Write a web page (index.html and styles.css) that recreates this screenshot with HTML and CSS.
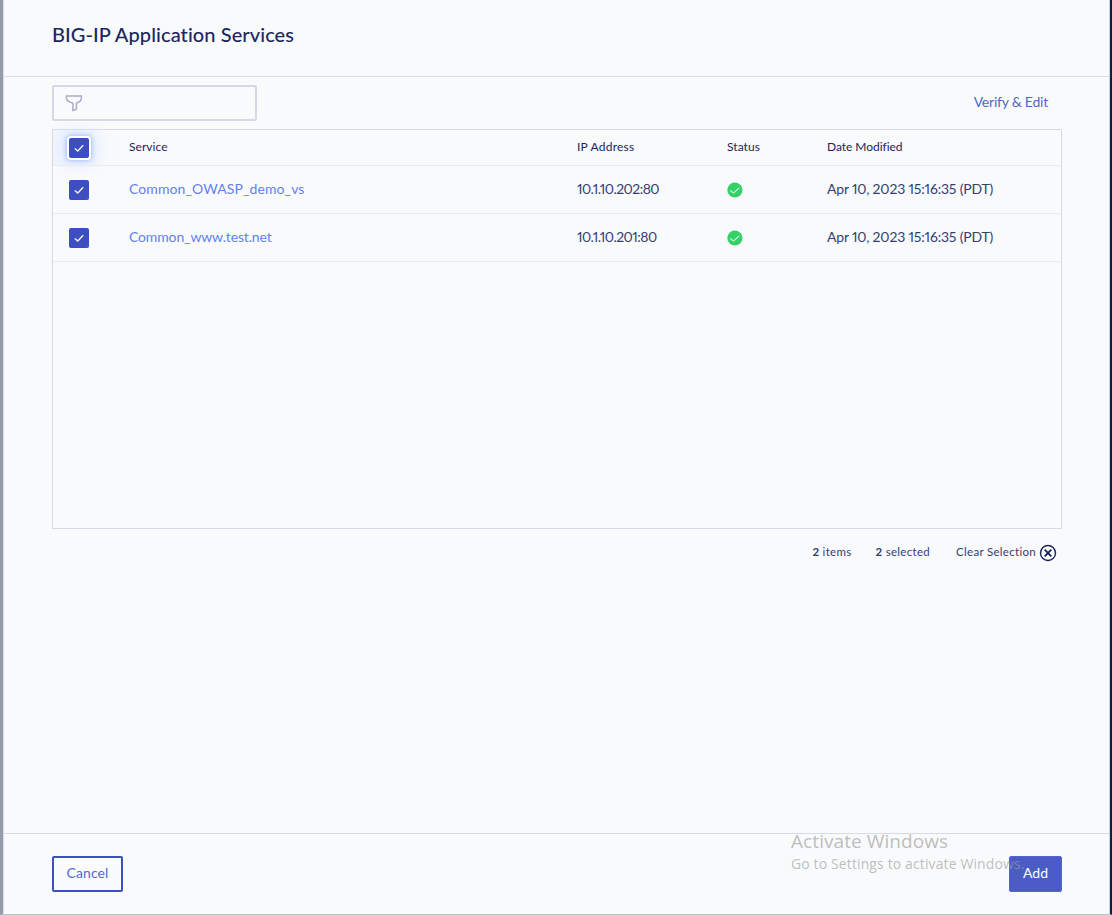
FILE: index.html
```html
<!DOCTYPE html>
<html lang="en">
<head>
<meta charset="utf-8">
<title>BIG-IP Application Services</title>
<link rel="stylesheet" href="styles.css">
</head>
<body>
<svg class="defs" width="0" height="0">
  <symbol id="tick" viewBox="0 0 20 20"><path d="M5.8 10.5l3 2.6 5.4-5.8" fill="none" stroke="#eef0ff" stroke-width="1.4"/></symbol>
  <symbol id="ok" viewBox="0 0 16 16"><circle cx="7.9" cy="8" r="7.6" fill="#34d168"/><path d="M3.4 8.5l3 2.6 5.9-5.3" fill="none" stroke="#d5ffe0" stroke-width="1.1"/></symbol>
</svg>
<main class="panel">
  <header class="header"><h1 class="title">BIG-IP Application Services</h1></header>
  <section class="content">
    <div class="toolbar">
      <div class="filter">
        <svg width="18" height="18" viewBox="0 0 18 18" fill="none" stroke="#a9adc6" stroke-width="1.5" stroke-linejoin="round"><path d="M1.3 1.9h15.2v1.4c0 3.2-2.4 5.1-5.1 5.9v5.8l-3.5 1.6V9.2C4 8.3 1.3 5.8 1.3 3.3z"/></svg>
      </div>
      <a class="verify">Verify &amp; Edit</a>
    </div>
    <div class="table">
      <div class="row head">
        <span class="check focus"><svg width="20" height="20"><use href="#tick"/></svg></span>
        <span class="text">Service</span><span class="text h-ip">IP Address</span><span class="text">Status</span><span class="text h-date">Date Modified</span>
      </div>
      <div class="row">
        <span class="check"><svg width="20" height="20"><use href="#tick"/></svg></span>
        <a class="text link">Common_OWASP_demo_vs</a><span class="text ip">10.1.10.202:80</span><svg class="ok" width="16" height="16"><use href="#ok"/></svg><span class="text date">Apr 10, 2023 15:16:35 (PDT)</span>
      </div>
      <div class="row">
        <span class="check"><svg width="20" height="20"><use href="#tick"/></svg></span>
        <a class="text link domain">Common_www.test.net</a><span class="text ip">10.1.10.201:80</span><svg class="ok" width="16" height="16"><use href="#ok"/></svg><span class="text date">Apr 10, 2023 15:16:35 (PDT)</span>
      </div>
    </div>
    <div class="summary">
      <span class="items"><b>2</b> items</span>
      <span class="selected"><b>2</b> selected</span>
      <span class="clear">Clear Selection</span>
      <svg width="18" height="18" viewBox="0 0 18 18" fill="none" stroke="#17235c"><circle cx="9" cy="9" r="7.5" stroke-width="1.4"/><path d="M5.7 5.7l6.6 6.6M12.3 5.7l-6.6 6.6" stroke-width="1.9"/></svg>
    </div>
  </section>
  <footer class="footer">
    <button class="btn cancel">Cancel</button>
    <button class="btn add">Add</button>
  </footer>
</main>
<div class="watermark"><div class="wm-title">Activate Windows</div><div class="wm-text">Go to Settings to activate Windows.</div></div>
</body>
</html>
```
FILE: styles.css
```css
* { box-sizing: border-box; }
body { margin: 0; height: 915px; overflow: hidden; background: #f9fafc; font-family: Lato, "Open Sans", sans-serif; font-variant-ligatures: none; color: #343e70; }
.defs { display: block; }
.panel { height: 915px; display: flex; flex-direction: column; border-left: 3px solid #969ba7; border-right: 2px solid #0b2340; border-bottom: 1px solid #bfc1c8; box-shadow: inset 1px 0 #d9dbe5, inset -1px 0 #d0d2d8; }
.header { height: 77px; padding: 19px 49px 0; border-bottom: 1px solid #d8dbe7; }
.title { margin: 0; font-size: 20px; line-height: 30px; font-weight: 500; letter-spacing: .08px; color: #1b2760; white-space: nowrap; }
.content { flex: 1; padding: 8px 48px 0 49px; }
.toolbar { height: 44px; display: flex; justify-content: space-between; align-items: flex-start; }
.filter { width: 205px; height: 36px; padding: 7px 11px; border: 2px solid #d5d8e6; border-radius: 2px; }
.verify { margin-right: 14px; font-size: 14px; line-height: 33px; letter-spacing: -.22px; color: #4f66d0; white-space: nowrap; }
.table { height: 400px; border: 1px solid #d7d9e6; }
.row { height: 48px; display: grid; grid-template-columns: 60px 448px 150px 100px 1fr; align-items: center; padding-left: 16px; border-bottom: 1px solid #ebecf1; font-size: 14px; white-space: nowrap; }
.row > span, .row > a { justify-self: start; }
.text { padding-bottom: 2px; }
.head { height: 36px; font-size: 12px; letter-spacing: .06px; color: #1b2558; background: linear-gradient(90deg, #f0f4fd, #f9fafc 65px); }
.h-ip { letter-spacing: .22px; }
.h-date { letter-spacing: -.04px; }
.check { width: 20px; height: 20px; background: #3d4fc0; border-radius: 2px; }
.check svg, .ok { display: block; }
.focus { box-shadow: 0 0 0 2px #fff, 0 0 4px 3px #a9c5ff, 0 0 14px 6px #dce7ff; }
.link { color: #6481f3; letter-spacing: .1px; }
.domain { letter-spacing: -.14px; }
.ip, .date { font-variant-numeric: proportional-nums; }
.ip { letter-spacing: -.53px; }
.date { letter-spacing: -.18px; }
.summary { height: 48px; display: flex; align-items: center; justify-content: flex-end; padding-right: 5px; font-size: 11.5px; letter-spacing: .3px; white-space: nowrap; }
.items, .selected, .clear { padding-bottom: 3px; }
.selected { margin-left: 24px; }
.clear { margin: 0 3px 0 26px; }
.footer { height: 81px; padding: 22px 48px 0 49px; border-top: 1px solid #d8dbe7; display: flex; justify-content: space-between; }
.btn { height: 36px; padding: 0 0 2px; border-radius: 2px; font: 14px/30px Lato, sans-serif; }
.cancel { width: 71px; background: #fafbfd; border: 2px solid #3d4fc4; color: #5467d0; letter-spacing: .1px; }
.add { width: 53px; background: #4c5cc5; border: 1px solid #5365d2; color: #fff; }
.watermark { position: absolute; left: 791px; top: 829px; font-family: "Open Sans", sans-serif; color: rgba(155,155,155,.65); white-space: nowrap; }
.wm-title { font-size: 19px; line-height: 25px; letter-spacing: .08px; }
.wm-text { font-size: 14px; line-height: 20px; letter-spacing: .12px; }
```
